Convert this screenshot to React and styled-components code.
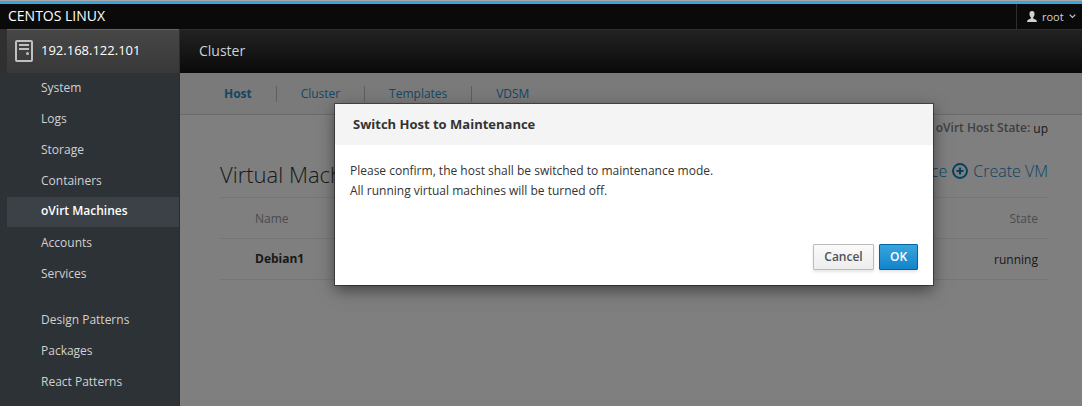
import React from 'react';
import styled, { createGlobalStyle, css } from 'styled-components';

const GlobalStyle = createGlobalStyle`
  * { box-sizing: border-box; }
  body {
    margin: 0;
    overflow: hidden;
    background: #fff;
    font: 12px/20px "Open Sans", "Noto Sans", sans-serif;
    color: #333;
  }
`;

const Page = styled.div`
  display: flex;
  flex-direction: column;
  height: 406px;
  white-space: nowrap;
`;

const TopBar = styled.header`
  display: flex;
  justify-content: space-between;
  flex: none;
  height: 29px;
  border-top: 1px solid #a8a8a8;
  background: linear-gradient(#39a5dc 3px, #0a0a0a 3px);
  padding-top: 3px;
`;

const Brand = styled.div`
  padding-left: 8px;
  font-size: 14px;
  line-height: 24px;
  color: #fff;
`;

const UserMenu = styled.div`
  display: flex;
  align-items: center;
  width: 66px;
  padding-left: 10px;
  border-left: 1px solid #2f2f2f;
  font-size: 11px;
  color: #d1d1d1;
  span { margin: 1px 5px 0 5px; }
`;

const Columns = styled.div`
  display: flex;
  flex: 1;
  min-height: 0;
`;

const Sidebar = styled.nav`
  width: 180px;
  flex: none;
  background: #2d3236;
  border-right: 1px solid #292e34;
`;

const HostBar = styled.div`
  display: flex;
  height: 44px;
  padding-left: 7px;
  background: #303030;
`;

const HostEntry = styled.div`
  display: flex;
  align-items: center;
  flex: 1;
  gap: 8px;
  padding: 0 0 1px 8px;
  border-top: 1px solid #656565;
  background: linear-gradient(#474747, #383838);
  font-size: 13px;
  color: #fff;
  span { padding-bottom: 2px; }
`;

const NavGroup = styled.ul`
  list-style: none;
  margin: 0 0 16px;
  padding: 0 0 0 7px;
`;

const NavItem = styled.li`
  height: 30px;
  margin-bottom: 1px;
  padding-left: 34px;
  line-height: 29px;
  color: #d1d1d1;
  ${({ $active }) => $active && css`
    background: #3b4146;
    color: #fff;
    font-weight: 600;
    line-height: 28px;
  `}
`;

const Content = styled.div`
  display: flex;
  flex-direction: column;
  flex: 1;
  min-width: 0;
`;

const TitleBar = styled.div`
  height: 44px;
  flex: none;
  padding-left: 19px;
  border-top: 1px solid #2f2f2f;
  background: linear-gradient(#222, #0a0a0a);
  font-size: 14px;
  line-height: 42px;
  color: #d1d1d1;
`;

const Main = styled.main`
  position: relative;
  flex: 1;
  background: #fff;
`;

const Tabs = styled.div`
  display: flex;
  align-items: center;
  height: 42px;
  padding-left: 20px;
  background: #f5f5f5;
  border-bottom: 1px solid #d5d5d5;
`;

const Tab = styled.a`
  height: 16px;
  padding: 0 23.85px 0 24px;
  line-height: 16px;
  color: #2a8ec8;
  font-weight: ${({ $active }) => ($active ? 700 : 400)};
  & + & { border-left: 1px solid #bcbcbc; }
`;

const Body = styled.div`
  padding: 3px 34px 0 40px;
`;

const HostState = styled.div`
  display: flex;
  justify-content: flex-end;
  gap: 4px;
  height: 33px;
  b { font-weight: 600; color: #808080; margin-right: -1px; }
  span { padding-top: 1px; }
`;

const Heading = styled.div`
  display: flex;
  justify-content: space-between;
  height: 47px;
  border-bottom: 1px solid #ececec;
  h3 {
    margin: 0;
    padding-top: 8px;
    font-size: 22px;
    font-weight: 300;
    line-height: 30px;
  }
`;

const Actions = styled.div`
  display: flex;
  align-items: center;
  height: 24px;
  margin-top: 8px;
  gap: 5px;
  font-size: 16px;
  font-weight: 300;
  color: #1485c6;
`;

const Row = styled.div`
  display: flex;
  justify-content: space-between;
  align-items: center;
  height: 41px;
  padding: 2px 10px 0 35px;
  border-bottom: 1px solid #ececec;
  color: ${({ $head }) => ($head ? '#999' : '#333')};
  b { padding-bottom: 2px; }
`;

const Backdrop = styled.div`
  position: absolute;
  inset: 0;
  background: rgba(0, 0, 0, 0.5);
`;

const Dialog = styled.section`
  position: absolute;
  left: 155px;
  top: 31px;
  width: 598px;
  height: 181px;
  display: flex;
  flex-direction: column;
  background: #fff;
  box-shadow: 0 0 0 1px rgba(0, 0, 0, 0.4), 0 5px 15px rgba(0, 0, 0, 0.5);
`;

const DialogTitle = styled.h4`
  margin: 0;
  height: 41px;
  padding-left: 18px;
  background: #f4f4f4;
  font-size: 13px;
  font-weight: 700;
  line-height: 41px;
`;

const DialogText = styled.p`
  flex: 1;
  margin: 0;
  padding: 16px 15px 14px;
`;

const DialogFooter = styled.footer`
  display: flex;
  justify-content: flex-end;
  gap: 5px;
  padding: 0 15px 15px;
`;

const Button = styled.button`
  width: ${({ $primary }) => ($primary ? 39 : 61)}px;
  height: 26px;
  padding: 0;
  border: 1px solid ${({ $primary }) => ($primary ? '#00659c' : '#bbb')};
  border-radius: 1px;
  background: ${({ $primary }) =>
    $primary ? 'linear-gradient(#39a5dc, #1383cb)' : 'linear-gradient(#fafafa, #ededed)'};
  box-shadow: 0 2px 3px rgba(3, 3, 3, 0.1);
  color: ${({ $primary }) => ($primary ? '#fff' : '#4d5258')};
  font: 600 12px/22px "Open Sans", sans-serif;
`;

const ServerIcon = () => (
  <svg width="18" height="22" viewBox="0 0 18 22" fill="none" stroke="#c0c0c0">
    <rect x="1" y="1" width="16" height="20" rx="1" strokeWidth="2" />
    <path d="M4 5h10M4 9h10" strokeWidth="2" />
    <circle cx="12.5" cy="13.5" r="1.5" fill="#c0c0c0" stroke="none" />
  </svg>
);

const UserIcon = () => (
  <svg width="10" height="11" viewBox="0 0 11 11" preserveAspectRatio="none" fill="#d1d1d1">
    <path d="M5.5 0C3.700 0 2.600 1.200 2.700 3c.1 1.500.7 2.600 1.500 3.300v1.200L1.200 8.700C.5 9 .2 9.600.2 11h10.600c0-1.400-.3-2-1-2.300L6.800 7.500V6.300C7.600 5.600 8.200 4.500 8.300 3 8.400 1.200 7.300 0 5.500 0z" />
  </svg>
);

const CaretIcon = () => (
  <svg width="7" height="5" viewBox="0 0 7 5" fill="none" stroke="#c4c4c4" strokeWidth="1.2">
    <path d="M.7.700 3.500 3.500 6.300.7" />
  </svg>
);

const AddIcon = () => (
  <svg width="16" height="16" viewBox="0 0 16 16" fill="none" stroke="#0b7fc0">
    <circle cx="8" cy="8" r="7" strokeWidth="1.9" />
    <path d="M8 4.500v7M4.500 8h7" strokeWidth="2.2" />
  </svg>
);

const primaryNav = ['System', 'Logs', 'Storage', 'Containers', 'oVirt Machines', 'Accounts', 'Services'];
const toolsNav = ['Design Patterns', 'Packages', 'React Patterns'];
const tabs = ['Host', 'Cluster', 'Templates', 'VDSM'];

export default function App() {
  return (
    <Page>
      <GlobalStyle />
      <TopBar>
        <Brand>CENTOS LINUX</Brand>
        <UserMenu><UserIcon /><span>root</span><CaretIcon /></UserMenu>
      </TopBar>
      <Columns>
        <Sidebar>
          <HostBar>
            <HostEntry><ServerIcon /><span>192.168.122.101</span></HostEntry>
          </HostBar>
          <NavGroup>
            {primaryNav.map((label) => (
              <NavItem key={label} $active={label === 'oVirt Machines'}>{label}</NavItem>
            ))}
          </NavGroup>
          <NavGroup>
            {toolsNav.map((label) => <NavItem key={label}>{label}</NavItem>)}
          </NavGroup>
        </Sidebar>
        <Content>
          <TitleBar>Cluster</TitleBar>
          <Main>
            <Tabs>
              {tabs.map((label) => <Tab key={label} $active={label === 'Host'}>{label}</Tab>)}
            </Tabs>
            <Body>
              <HostState><b>oVirt Host State:</b><span>up</span></HostState>
              <Heading>
                <h3>Virtual Machines</h3>
                <Actions>Host to Maintenance <AddIcon /> Create VM</Actions>
              </Heading>
              <Row $head><span>Name</span><span>State</span></Row>
              <Row><b>Debian1</b><span>running</span></Row>
            </Body>
            <Backdrop />
            <Dialog role="dialog">
              <DialogTitle>Switch Host to Maintenance</DialogTitle>
              <DialogText>
                Please confirm, the host shall be switched to maintenance mode.<br />
                All running virtual machines will be turned off.
              </DialogText>
              <DialogFooter>
                <Button>Cancel</Button>
                <Button $primary>OK</Button>
              </DialogFooter>
            </Dialog>
          </Main>
        </Content>
      </Columns>
    </Page>
  );
}
